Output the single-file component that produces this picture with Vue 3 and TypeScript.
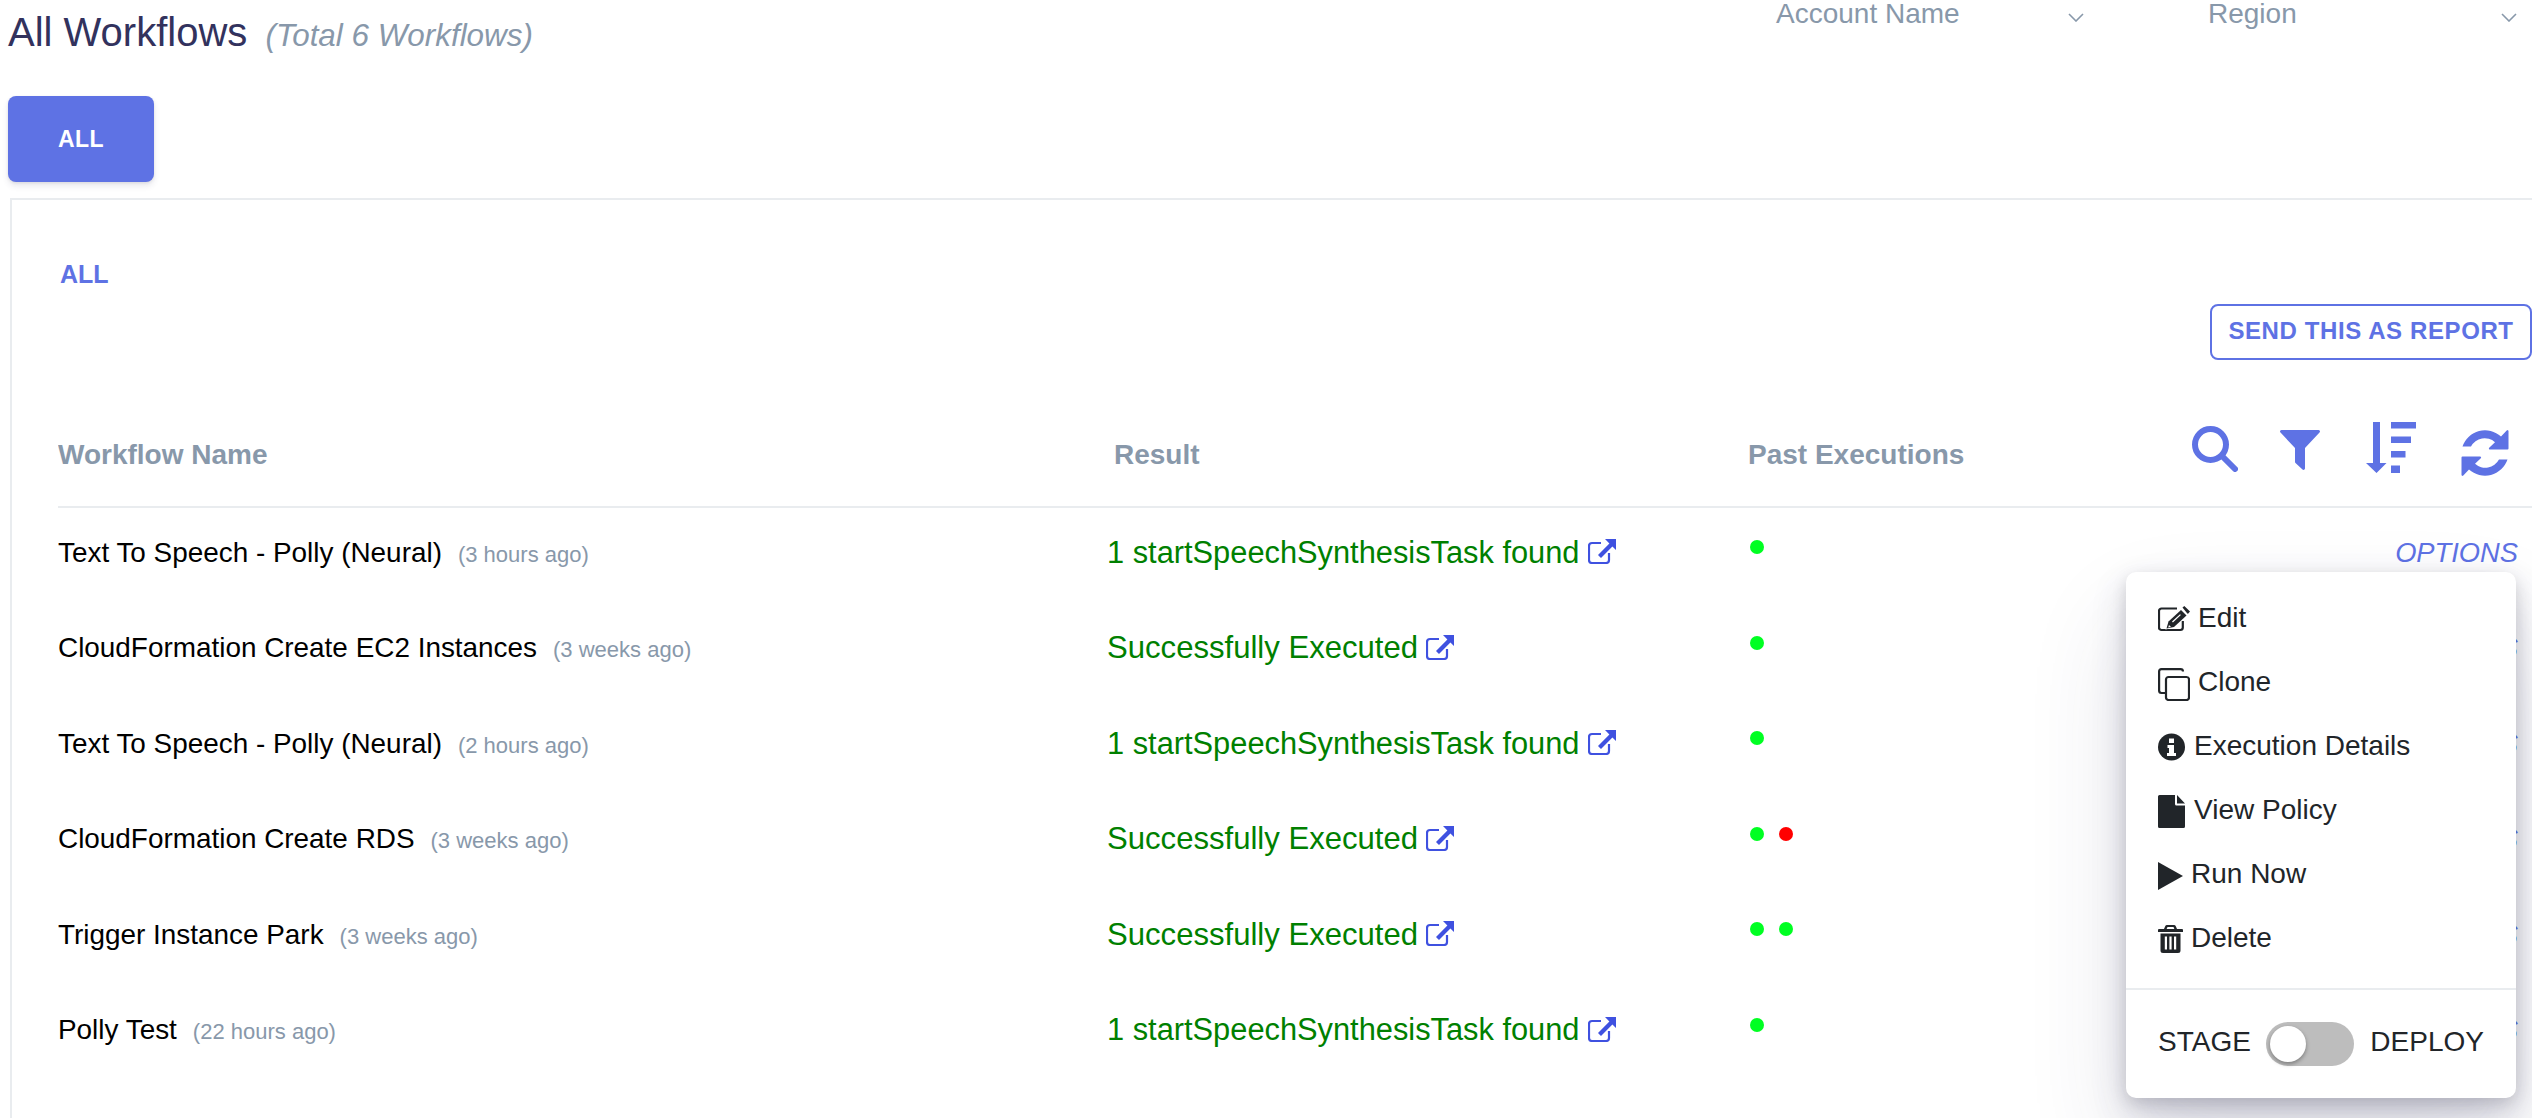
<script setup lang="ts">
interface Row {
  name: string
  age: string
  result: string
  dots: string[]
}

const rows: Row[] = [
  { name: 'Text To Speech - Polly (Neural)', age: '(3 hours ago)', result: '1 startSpeechSynthesisTask found', dots: ['ok'] },
  { name: 'CloudFormation Create EC2 Instances', age: '(3 weeks ago)', result: 'Successfully Executed', dots: ['ok'] },
  { name: 'Text To Speech - Polly (Neural)', age: '(2 hours ago)', result: '1 startSpeechSynthesisTask found', dots: ['ok'] },
  { name: 'CloudFormation Create RDS', age: '(3 weeks ago)', result: 'Successfully Executed', dots: ['ok', 'bad'] },
  { name: 'Trigger Instance Park', age: '(3 weeks ago)', result: 'Successfully Executed', dots: ['ok', 'ok'] },
  { name: 'Polly Test', age: '(22 hours ago)', result: '1 startSpeechSynthesisTask found', dots: ['ok'] }
]
</script>

<template>
  <div class="page">
    <header class="top">
      <h1 class="title">All Workflows <em>(Total 6 Workflows)</em></h1>
      <div class="selects">
        <div class="select account">
          <span>Account Name</span>
          <svg width="16" height="9" viewBox="0 0 16 9"><path d="M1 1l7 7 7-7" fill="none" stroke="#8898aa" stroke-width="1.6" /></svg>
        </div>
        <div class="select region">
          <span>Region</span>
          <svg width="16" height="9" viewBox="0 0 16 9"><path d="M1 1l7 7 7-7" fill="none" stroke="#8898aa" stroke-width="1.6" /></svg>
        </div>
      </div>
    </header>

    <button class="pill">ALL</button>

    <section class="panel">
      <div class="tab">ALL</div>
      <div class="report-row"><button class="report">SEND THIS AS REPORT</button></div>

      <div class="table">
        <div class="thead">
          <div class="h-name">Workflow Name</div>
          <div class="h-result">Result</div>
          <div class="h-past">Past Executions</div>
          <div class="tools">
            <svg class="t-search" width="46" height="46" viewBox="0 0 46 46"><circle cx="18.5" cy="18.5" r="15.5" fill="none" stroke="#5e72e4" stroke-width="6" /><path d="M30 30l13 13" stroke="#5e72e4" stroke-width="6" stroke-linecap="round" /></svg>
            <svg class="t-filter" width="40" height="40" viewBox="0 0 40 40"><path d="M1.5 0h37a1.5 1.5 0 0 1 1 2.6L25 18v20.5a1.5 1.5 0 0 1-2.5 1L15.5 33a1.5 1.5 0 0 1-.5-1V18L.5 2.6A1.5 1.5 0 0 1 1.500 0z" fill="#5e72e4" /></svg>
            <svg class="t-sort" width="50" height="52" viewBox="0 0 50 52"><path d="M7 0h7v41h6.500L10.500 51 0 41h7z" fill="#5e72e4" /><path d="M25 0h25v6.500H25zM25 14.500h20v6.500H25zM25 29h14.500v6.500H25zM25 43.500h9V51h-9z" fill="#5e72e4" /></svg>
            <svg class="t-refresh" width="48" height="48" viewBox="0 0 48 48"><path d="M47.500 2v17.500a1 1 0 0 1-1 1H29a1 1 0 0 1-.8-1.700l5.800-5.600A15.500 15.500 0 0 0 10 17.500H1.500A23.800 23.800 0 0 1 40 7.500l5.700-6a1 1 0 0 1 1.800.5zM.5 46V28.500a1 1 0 0 1 1-1H19a1 1 0 0 1 .8 1.700L14 34.800a15.500 15.500 0 0 0 24-4.300h8.500A23.800 23.800 0 0 1 8 40.500l-5.700 6A1 1 0 0 1 .5 46z" fill="#5e72e4" /></svg>
          </div>
        </div>

        <div v-for="(row, i) in rows" :key="i" class="tr">
          <div class="c-name"><span class="name">{{ row.name }}</span><span class="age">{{ row.age }}</span></div>
          <div class="c-result" :class="{ done: row.result.startsWith('Success') }">
            <span class="res">{{ row.result }}</span>
            <svg class="ext" width="28" height="25" viewBox="0 0 28 25"><path d="M21 14v7a3 3 0 0 1-3 3H4a3 3 0 0 1-3-3V7a3 3 0 0 1 3-3h9" fill="none" stroke="#3f51e0" stroke-width="2.200" /><path d="M17 0h11v11l-3.600-3.600L13 19l-3-3L21.400 4.500z" fill="#3f51e0" /></svg>
          </div>
          <div class="c-past"><i v-for="(d, k) in row.dots" :key="k" class="dot" :class="d" /></div>
          <div class="c-opt">OPTIONS</div>
        </div>

        <div class="menu">
          <div class="items">
            <div class="item i1">
              <svg class="ic-edit" width="32" height="26" viewBox="0 0 32 26"><path d="M24.800 15v6.500a2.500 2.500 0 0 1-2.500 2.500H3.500A2.500 2.500 0 0 1 1 21.500V5a2.500 2.500 0 0 1 2.500-2.500H19" fill="none" stroke="#212529" stroke-width="2.200" /><path d="M10.500 15.500L23 4l5.500 5.500L16 21l-7.500 1.500z" fill="#212529" stroke="#fff" stroke-width="1.600" paint-order="stroke" /><path d="M24.500 1.500l1.800-1.500 5.700 5.500-1.700 2-.8.300z" fill="#212529" /><path d="M11 19l2 2-2.800.6zM14 15.500l8-7.300.9.900-8 7.300z" fill="#fff" /></svg>
              Edit
            </div>
            <div class="item i1">
              <svg class="ic-clone" width="32" height="33" viewBox="0 0 32 33"><path d="M25 3.500A2.500 2.500 0 0 0 22.500 1.100H3.500A2.500 2.500 0 0 0 1.100 3.500v19A2.500 2.500 0 0 0 3.500 25H7" fill="none" stroke="#212529" stroke-width="2.200" /><rect x="8" y="9" width="23" height="23" rx="2.500" fill="none" stroke="#212529" stroke-width="2.200" /></svg>
              Clone
            </div>
            <div class="item i2">
              <svg class="ic-info" width="27" height="28" viewBox="0 0 27 28"><circle cx="13.500" cy="14" r="13.500" fill="#212529" /><path d="M11 5.500h5v4.500h-5zM9.500 12h6.500v8h2v3H9v-3h2v-5H9.500z" fill="#fff" /></svg>
              Execution Details
            </div>
            <div class="item i2">
              <svg class="ic-file" width="27" height="33" viewBox="0 0 27 33"><path d="M1.500 0H17v9a1.500 1.500 0 0 0 1.500 1.500H27v21a1.500 1.500 0 0 1-1.500 1.500h-24A1.500 1.500 0 0 1 0 31.500v-30A1.500 1.500 0 0 1 1.500 0zM19 0l8 8.500h-8z" fill="#212529" /></svg>
              View Policy
            </div>
            <div class="item i3">
              <svg class="ic-play" width="25" height="28" viewBox="0 0 25 28"><path d="M0 0l25 14L0 28z" fill="#212529" /></svg>
              Run Now
            </div>
            <div class="item i3">
              <svg class="ic-trash" width="25" height="28" viewBox="0 0 25 28"><path fill-rule="evenodd" d="M9 0h7a2 2 0 0 1 1.800 1.200L19 4h5a1 1 0 0 1 1 1v2H0V5a1 1 0 0 1 1-1h5l1.200-2.800A2 2 0 0 1 9 0zM9.500 2L8.600 4h7.800l-.9-2zM2.500 8.500h20v17a2.500 2.500 0 0 1-2.500 2.500H5a2.500 2.500 0 0 1-2.500-2.500zM6.800 11.500v13h2.200v-13zM11.400 11.500v13h2.200v-13zM16 11.500v13h2.200v-13z" fill="#212529" /></svg>
              Delete
            </div>
          </div>
          <div class="stage">
            <span class="lbl">STAGE</span>
            <span class="switch"><span class="knob" /></span>
            <span class="lbl">DEPLOY</span>
          </div>
        </div>
      </div>
    </section>
  </div>
</template>

<style>
html,
body {
  margin: 0;
  background: #fff;
  overflow: hidden;
}
</style>

<style scoped>
.page {
  width: 2542px;
  height: 1118px;
  box-sizing: border-box;
  overflow: hidden;
  padding-left: 8px;
  font-family: "Liberation Sans", Arial, sans-serif;
}
.top {
  display: flex;
  justify-content: space-between;
  height: 96px;
}
.title {
  margin: 9px 0 0;
  font-size: 40px;
  line-height: 46px;
  font-weight: 400;
  color: #32325d;
  white-space: pre-wrap;
}
.title em {
  font-size: 31.4px;
  color: #8898aa;
  margin-left: 7px;
}
.selects {
  display: flex;
}
.select {
  height: 28px;
  display: flex;
  align-items: center;
  justify-content: space-between;
  font-size: 28px;
  line-height: 28px;
  color: #8898aa;
}
.select svg {
  margin-top: 6px;
}
.account {
  width: 308px;
  margin-right: 124px;
}
.region {
  width: 309px;
  margin-right: 25px;
}
.pill {
  display: block;
  width: 146px;
  height: 86px;
  border: 0;
  border-radius: 8px;
  background: #5e72e4;
  color: #fff;
  font: 700 23px "Liberation Sans", Arial, sans-serif;
  letter-spacing: 0.4px;
  box-shadow: 0 4px 6px rgba(50, 50, 93, 0.11), 0 1px 3px rgba(0, 0, 0, 0.08);
}
.panel {
  margin: 16px 0 0 2px;
  border-top: 2px solid #e9ecef;
  border-left: 2px solid #e9ecef;
  width: 2522px;
  box-sizing: border-box;
  height: 920px;
  padding-left: 46px;
}
.tab {
  margin-top: 60px;
  height: 28px;
  font-size: 25px;
  line-height: 28px;
  font-weight: 700;
  color: #5e72e4;
  padding-left: 2px;
}
.report-row {
  display: flex;
  justify-content: flex-end;
  margin-top: 16px;
}
.report {
  width: 322px;
  height: 56px;
  padding: 0 0 2px;
  background: #fff;
  border: 2px solid #5e72e4;
  border-radius: 8px;
  color: #5e72e4;
  font: 700 24px "Liberation Sans", Arial, sans-serif;
  letter-spacing: 0.6px;
}
.table {
  position: relative;
  overflow: hidden;
  height: 760px;
}
.thead {
  height: 148px;
  box-sizing: border-box;
  border-bottom: 2px solid #e9ecef;
  display: grid;
  grid-template-columns: 1056px 634px 1fr;
  font-size: 28px;
  font-weight: 700;
  color: #8898aa;
  line-height: 32px;
  padding-top: 79px;
  position: relative;
}
.tools {
  position: absolute;
  left: 0;
  right: 0;
  top: 66px;
  height: 54px;
  display: flex;
  align-items: flex-start;
  padding-left: 2134px;
}
.t-filter {
  margin: 4px 0 0 42px;
}
.t-sort {
  margin: -4px 0 0 46px;
}
.t-refresh {
  margin: 3px 0 0 45px;
}
.tr {
  height: 95.6px;
  display: grid;
  grid-template-columns: 1049px 642.5px 1fr auto;
  align-items: start;
  padding-right: 14px;
}
.c-name {
  font-size: 27.9px;
  line-height: 32px;
  color: #000;
  padding-top: 28.5px;
}
.age {
  font-size: 22px;
  color: #8898aa;
  margin-left: 16px;
}
.c-result {
  padding-top: 28.5px;
  font-size: 30.8px;
  line-height: 32px;
  color: #008000;
  display: flex;
  align-items: flex-start;
}
.c-result.done {
  font-size: 31.1px;
}
.ext {
  margin: 2.5px 0 0 8px;
}
.c-past {
  padding-top: 32px;
  display: flex;
  gap: 15px;
}
.dot {
  width: 14px;
  height: 14px;
  border-radius: 50%;
}
.dot.ok {
  background: #00ff22;
}
.dot.bad {
  background: #ff0000;
}
.c-opt {
  padding-top: 28.5px;
  font-size: 27.3px;
  line-height: 32px;
  font-style: italic;
  color: #5e72e4;
}
.menu {
  position: absolute;
  left: 2068px;
  top: 212px;
  width: 390px;
  height: 526px;
  background: #fff;
  border-radius: 10px;
  box-shadow: 0 50px 100px rgba(50, 50, 93, 0.14), 0 15px 35px rgba(50, 50, 93, 0.2), 0 5px 15px rgba(0, 0, 0, 0.12);
  color: #212529;
  font-size: 28px;
  line-height: 32px;
}
.items {
  height: 418px;
  box-sizing: border-box;
  padding: 30px 0 0 32px;
  border-bottom: 2px solid #e9ecef;
}
.item {
  height: 64px;
  display: flex;
  align-items: flex-start;
  gap: 8px;
}
.item.i2 {
  gap: 9px;
}
.ic-edit {
  margin-top: 4px;
}
.ic-clone {
  margin-top: 2px;
}
.ic-info {
  margin-top: 3px;
}
.ic-file {
  margin-top: 1px;
}
.ic-play {
  margin-top: 4px;
}
.ic-trash {
  margin-top: 3px;
}
.stage {
  display: flex;
  align-items: center;
  padding: 32px 0 0 32px;
}
.lbl {
  margin-bottom: 4px;
}
.switch {
  width: 88px;
  height: 44px;
  margin: 0 16px 0 15.5px;
  border-radius: 22px;
  background: #bdbdbd;
  display: flex;
  align-items: center;
  padding-left: 4px;
  box-sizing: border-box;
}
.knob {
  width: 36px;
  height: 36px;
  border-radius: 50%;
  background: #fff;
  box-shadow: 0 2px 4px rgba(0, 0, 0, 0.35);
}
</style>
